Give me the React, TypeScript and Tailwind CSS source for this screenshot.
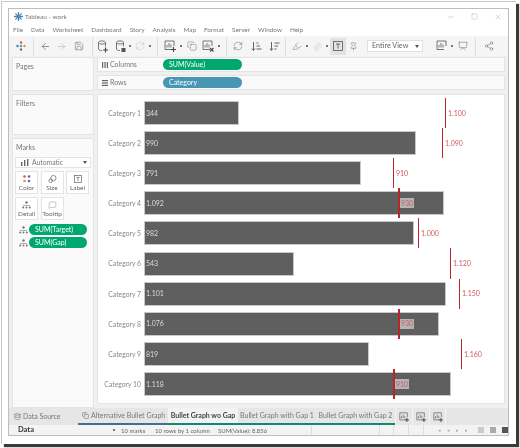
// Tableau workbook window with a bullet graph sheet
import type { ReactNode } from 'react';
import {
  ArrowLeft, ArrowRight, Save, RefreshCw, Pin, Presentation, Share2, Paperclip, Highlighter, Minus, Square, X,
  Database, Copy, MessageSquare,
} from 'lucide-react';

const FONT = { fontFamily: 'Lato, "Liberation Sans", sans-serif' };
const MENUS = ['File', 'Data', 'Worksheet', 'Dashboard', 'Story', 'Analysis', 'Map', 'Format', 'Server', 'Window', 'Help'];
const SCALE = 0.2735;

const ROWS = [
  { name: 'Category 1', value: 344, label: '344', target: 1100, tlabel: '1.100' },
  { name: 'Category 2', value: 990, label: '990', target: 1090, tlabel: '1.090' },
  { name: 'Category 3', value: 791, label: '791', target: 910, tlabel: '910' },
  { name: 'Category 4', value: 1092, label: '1.092', target: 930, tlabel: '930' },
  { name: 'Category 5', value: 982, label: '982', target: 1000, tlabel: '1.000' },
  { name: 'Category 6', value: 543, label: '543', target: 1120, tlabel: '1.120' },
  { name: 'Category 7', value: 1101, label: '1.101', target: 1150, tlabel: '1.150' },
  { name: 'Category 8', value: 1076, label: '1.076', target: 930, tlabel: '930' },
  { name: 'Category 9', value: 819, label: '819', target: 1160, tlabel: '1.160' },
  { name: 'Category 10', value: 1118, label: '1.118', target: 910, tlabel: '910' },
];

function Dot() {
  return <span className="mx-[2px] h-[2px] w-[2px] shrink-0 bg-[#777]" />;
}

function Sep() {
  return <span className="mx-[4px] h-[19px] w-px shrink-0 bg-[#dedede]" />;
}

function Btn({ children, w = 17, on, className = '' }: { children: ReactNode; w?: number; on?: boolean; className?: string }) {
  return (
    <span className={`flex h-[17px] shrink-0 items-center justify-center ${on ? 'bg-[#e2e2e2]' : ''} ${className}`} style={{ width: w }}>
      {children}
    </span>
  );
}

function Cylinder({ badge }: { badge: 'plus' | 'square' }) {
  return (
    <svg width="12" height="13" viewBox="0 0 12 13" fill="none" stroke="#666" strokeWidth="0.9">
      <ellipse cx="5" cy="2.5" rx="3.5" ry="1.6" />
      <path d="M1.5 2.5v6.5c0 .9 1.6 1.6 3.5 1.6M8.500 2.500v4" />
      {badge === 'plus' ? (
        <path d="M8.500 7.500v5M6 10h5" stroke="#444" strokeWidth="1.100" />
      ) : (
        <rect x="6.500" y="8" width="4" height="4" fill="#555" stroke="none" />
      )}
    </svg>
  );
}

function SheetIcon({ badge, size = 12 }: { badge: 'plus' | 'x' | 'none'; size?: number }) {
  return (
    <svg width={size} height={size} viewBox="0 0 12 12" fill="none" stroke="#666" strokeWidth="0.9">
      <path d="M8 9.500H1V1h9v5" />
      <path d="M3 7.500V5M5 7.500V3M7 7.500V4.500" />
      {badge === 'plus' && <path d="M9.500 7v5M7 9.500h5" stroke="#444" strokeWidth="1.100" />}
      {badge === 'x' && <path d="M8 8l3.500 3.500M11.500 8L8 11.500" stroke="#444" strokeWidth="1.100" />}
    </svg>
  );
}

function DetailIcon() {
  return (
    <svg width="9" height="8" viewBox="0 0 9 8" fill="#777">
      <circle cx="4.500" cy="1.500" r="1.200" />
      <circle cx="1.200" cy="6.500" r="1" />
      <circle cx="4.500" cy="6.500" r="1" />
      <circle cx="7.800" cy="6.500" r="1" />
      <rect x="1" y="4" width="7" height="0.600" />
    </svg>
  );
}

function SortIcon({ flip }: { flip?: boolean }) {
  return (
    <svg width="11" height="11" viewBox="0 0 11 11" fill="none" stroke="#666" strokeWidth="1">
      <path d="M2.500 1v8M1 7.500l1.500 2 1.500-2" />
      {flip ? <path d="M5.500 2h5M5.500 5h3.500M5.500 8h2" /> : <path d="M5.500 2h2M5.500 5h3.500M5.500 8h5" />}
    </svg>
  );
}

function TBox({ size = 10 }: { size?: number }) {
  return (
    <svg width={size} height={size} viewBox="0 0 10 10" fill="none" stroke="#555" strokeWidth="0.800">
      <rect x="0.500" y="0.500" width="9" height="9" />
      <path d="M3 3h4M5 3v4.500" />
    </svg>
  );
}

function Caret() {
  return <span className="ml-auto mr-[3px] h-0 w-0 border-x-2 border-t-[3px] border-x-transparent border-t-[#555]" />;
}

function MiniBars() {
  return (
    <svg width="8" height="7" viewBox="0 0 8 7" fill="#666" className="mr-[3px]">
      <rect x="0" y="3" width="1.400" height="4" />
      <rect x="3" y="1" width="1.400" height="6" />
      <rect x="6" y="0" width="1.400" height="7" />
    </svg>
  );
}

function Card({ title, className, children }: { title: string; className: string; children?: ReactNode }) {
  return (
    <div className={`border border-[#e4e4e4] bg-[#fafafa] px-[2px] pt-[2px] ${className}`}>
      <div className="pl-px text-[7px] leading-[12px] text-[#777]">{title}</div>
      {children}
    </div>
  );
}

function MarkBtn({ label, children }: { label: string; children: ReactNode }) {
  return (
    <div className="flex h-[23px] w-[23px] flex-col items-center justify-between border border-[#e4e4e4] bg-white pb-px pt-[3px] text-[6.500px] leading-[9px] text-[#666]">
      {children}
      <span>{label}</span>
    </div>
  );
}

function Shelf({ icon, label, pill, color }: { icon: ReactNode; label: string; pill: string; color: string }) {
  return (
    <div className="flex h-[15px] items-center border border-[#e4e4e4] bg-[#fafafa]">
      <span className="ml-[2px] flex w-[10px] justify-center">{icon}</span>
      <span className="w-[53px] text-[7px] text-[#777]">{label}</span>
      <span className={`flex h-[11px] w-[79px] items-center rounded-full pl-[6px] text-[7px] text-white ${color}`}>{pill}</span>
    </div>
  );
}

function Pill({ text }: { text: string }) {
  return (
    <div className="flex h-[11px] items-center gap-px pl-[4px]">
      <DetailIcon />
      <span className="flex h-[11px] w-[58px] items-center rounded-full bg-[#00a86f] pl-[6px] text-[7px] text-white">{text}</span>
    </div>
  );
}

function BarRow({ row }: { row: (typeof ROWS)[number] }) {
  const tickX = Math.round(row.target * SCALE);
  const over = row.target < row.value;
  return (
    <div className="flex h-[30.1px] items-center">
      <div className="w-[46px] shrink-0 pr-[3px] text-right text-[6.800px] text-[#888]">{row.name}</div>
      <div className="relative flex h-[30.1px] flex-1 items-center">
        <div
          className="flex h-[24px] items-center border border-[#c9c9c9] bg-[#5f5f5f] pl-[1px] text-[7px] text-[#dcdcdc]"
          style={{ width: row.value * SCALE + 1 }}
        >
          {row.label}
        </div>
        <div className={`absolute inset-y-0 bg-[#b5262d] ${over ? 'w-[1.750px]' : 'w-[1.250px]'}`} style={{ left: tickX }} />
        <div
          className={`absolute top-[10px] flex h-[10px] items-center px-px text-[7px] text-[#cf5a5f] ${over ? 'bg-[#b4b4b4]' : ''}`}
          style={{ left: tickX + 2 }}
        >
          {row.tlabel}
        </div>
      </div>
    </div>
  );
}

export default function App() {
  return (
    <div className="h-[448px] w-[520px] overflow-hidden whitespace-nowrap bg-white pl-px pt-px blur-[0.35px]" style={FONT}>
      <div className="h-[443px] w-[515px] border-l border-t border-[#c8c8c8] bg-white pl-[6px] pt-[6px] shadow-[3px_3px_1px_#3a3a3a]">
        <div className="flex h-[428px] w-[501px] flex-col border border-[#bdbdbd] bg-white">
          {/* Title bar */}
          <div className="flex h-[15px] shrink-0 items-center pl-[5px]">
            <svg width="9" height="9" viewBox="0 0 10 10" className="mr-[2px]">
              <path d="M5 0v10M0 5h10M1.500 1.500l7 7M8.500 1.500l-7 7" stroke="#4a86b5" strokeWidth="1.400" />
            </svg>
            <span className="text-[6.500px] text-[#777]">Tableau - work</span>
            <span className="ml-auto flex items-center gap-[16px] pr-[6px]">
              <Minus size={8} strokeWidth={1} color="#888" />
              <Square size={7} strokeWidth={1} color="#888" />
              <X size={8} strokeWidth={1} color="#888" />
            </span>
          </div>
          {/* Menu */}
          <div className="flex h-[12px] shrink-0 items-center gap-[8px] pl-[4px] text-[6.400px] text-[#777]">
            {MENUS.map((m) => (
              <span key={m}>{m}</span>
            ))}
          </div>
          {/* Toolbar */}
          <div className="flex h-[20px] shrink-0 items-center bg-[#f5f5f5] pl-[4px]">
            <Btn w={16}>
              <svg width="10" height="10" viewBox="0 0 10 10">
                <circle cx="5" cy="1.500" r="1.200" fill="#d9534f" />
                <circle cx="1.500" cy="5" r="1.200" fill="#4e79a7" />
                <circle cx="8.500" cy="5" r="1.200" fill="#e8913a" />
                <circle cx="5" cy="8.500" r="1.200" fill="#7a5aa6" />
                <circle cx="5" cy="5" r="1.200" fill="#3aa6a0" />
              </svg>
            </Btn>
            <Sep />
            <Btn w={15}><ArrowLeft size={11} strokeWidth={1.300} color="#555" /></Btn>
            <Btn w={17}><ArrowRight size={11} strokeWidth={1.100} color="#aaa" /></Btn>
            <Btn w={18}><Save size={10} strokeWidth={1.200} color="#666" /></Btn>
            <Sep />
            <Btn w={12}><Cylinder badge="plus" /></Btn>
            <Btn w={12} className="ml-[6px]"><Cylinder badge="square" /></Btn>
            <Dot />
            <Btn w={14}><RefreshCw size={10} strokeWidth={1} color="#bbb" /></Btn>
            <Dot />
            <Sep />
            <Btn w={16}><SheetIcon badge="plus" /></Btn>
            <Dot />
            <Btn w={16}><Copy size={10} strokeWidth={1.100} color="#666" /></Btn>
            <Btn w={16}><SheetIcon badge="x" /></Btn>
            <Dot />
            <Sep />
            <Btn w={14}><RefreshCw size={10} strokeWidth={1.200} color="#666" /></Btn>
            <Btn w={22}><SortIcon /></Btn>
            <Btn w={14}><SortIcon flip /></Btn>
            <Sep />
            <Btn w={14}><Highlighter size={10} strokeWidth={1.100} color="#666" /></Btn>
            <Dot />
            <Btn w={14}><Paperclip size={9} strokeWidth={1.100} color="#bbb" /></Btn>
            <Dot />
            <Btn w={16} on><TBox /></Btn>
            <Btn w={15}><Pin size={9} strokeWidth={1.200} color="#666" /></Btn>
            <span className="ml-[6px] flex h-[12px] w-[56px] shrink-0 items-center border border-[#e0e0e0] bg-white pl-[4px] text-[7.200px] text-[#666]">
              Entire View
              <Caret />
            </span>
            <span className="ml-[4px]"><Sep /></span>
            <Btn w={14}><SheetIcon badge="none" /></Btn>
            <Dot />
            <Btn w={16}><Presentation size={10} strokeWidth={1.200} color="#666" /></Btn>
            <Sep />
            <Btn w={17}><Share2 size={10} strokeWidth={1.200} color="#666" /></Btn>
          </div>
          {/* Workspace */}
          <div className="flex min-h-0 flex-1 gap-[3px] bg-[#f0f0f0] px-[3px] pt-px">
            <div className="flex w-[82px] shrink-0 flex-col gap-[3px]">
              <Card title="Pages" className="h-[34px]" />
              <Card title="Filters" className="h-[41px]" />
              <Card title="Marks" className="flex-1">
                <div className="mt-[4px] flex h-[11px] items-center border border-[#e4e4e4] bg-white pl-[5px] text-[6.800px] text-[#777]">
                  <MiniBars />
                  Automatic
                  <Caret />
                </div>
                <div className="mt-[3px] flex flex-wrap gap-x-[2.500px] gap-y-[3px]">
                  <MarkBtn label="Color">
                    <svg width="8" height="8" viewBox="0 0 8 8">
                      <circle cx="1.500" cy="1.500" r="1.300" fill="#d9534f" />
                      <circle cx="6" cy="1.500" r="1.300" fill="#7a5aa6" />
                      <circle cx="1.500" cy="6" r="1.300" fill="#e8913a" />
                      <circle cx="6" cy="6" r="1.300" fill="#4e79a7" />
                    </svg>
                  </MarkBtn>
                  <MarkBtn label="Size">
                    <svg width="9" height="9" viewBox="0 0 9 9" fill="none" stroke="#666" strokeWidth="0.800">
                      <circle cx="5.500" cy="3.500" r="3" />
                      <circle cx="2.500" cy="6.500" r="2" />
                    </svg>
                  </MarkBtn>
                  <MarkBtn label="Label"><TBox size={8} /></MarkBtn>
                  <MarkBtn label="Detail"><DetailIcon /></MarkBtn>
                  <MarkBtn label="Tooltip"><MessageSquare size={9} strokeWidth={1.100} color="#666" /></MarkBtn>
                </div>
                <div className="mt-[4px] flex flex-col gap-[2px]">
                  <Pill text="SUM(Target)" />
                  <Pill text="SUM(Gap)" />
                </div>
              </Card>
            </div>
            <div className="flex min-w-0 flex-1 flex-col">
              <div className="flex flex-col gap-[3px]">
                <Shelf
                  icon={
                    <svg width="6" height="6" viewBox="0 0 6 6" fill="#666">
                      <rect x="0" width="1.200" height="6" /><rect x="2.400" width="1.200" height="6" /><rect x="4.800" width="1.200" height="6" />
                    </svg>
                  }
                  label="Columns"
                  pill="SUM(Value)"
                  color="bg-[#00a86f]"
                />
                <Shelf
                  icon={
                    <svg width="6" height="6" viewBox="0 0 6 6" fill="#666">
                      <rect y="0" width="6" height="1.200" /><rect y="2.400" width="6" height="1.200" /><rect y="4.800" width="6" height="1.200" />
                    </svg>
                  }
                  label="Rows"
                  pill="Category"
                  color="bg-[#4696b4]"
                />
              </div>
              <div className="mt-[4px] h-[310px] border border-[#e4e4e4] bg-white pt-[3px]">
                {ROWS.map((r) => (
                  <BarRow key={r.name} row={r} />
                ))}
              </div>
            </div>
          </div>
          {/* Tabs */}
          <div className="flex h-[17px] shrink-0 items-stretch bg-[#e6e6e6] text-[7px] text-[#777]">
            <div className="flex w-[69px] items-center pl-[5px]">
              <Database size={7} color="#777" className="mr-[2px]" />Data Source
            </div>
            <div className="flex w-[90px] items-center border-b-2 border-[#3f6f94] pl-[4px]">
              <Copy size={7} color="#777" className="mr-[2px]" />Alternative Bullet Graph
            </div>
            <div className="flex w-[70px] items-center justify-center border-b-2 border-[#0f8a70] bg-[#f3f3f3] font-bold text-[#444]">
              Bullet Graph wo Gap
            </div>
            <div className="flex w-[78px] items-center justify-center border-b-2 border-[#0f8a70]">Bullet Graph with Gap 1</div>
            <div className="flex w-[79px] items-center justify-center border-b-2 border-[#0f8a70]">Bullet Graph with Gap 2</div>
            <div className="flex flex-1">
              {(['a', 'b', 'c'] as const).map((k) => (
                <span key={k} className="flex w-[17px] items-center justify-center border-l border-[#f5f5f5] last:border-r">
                  <SheetIcon badge="plus" size={10} />
                </span>
              ))}
            </div>
          </div>
          {/* Status bar */}
          <div className="flex h-[10px] shrink-0 items-center bg-[#f3f3f3] text-[6px] text-[#666]">
            <span className="w-[104px] pl-[9px] text-[7.500px] font-bold text-[#333]">Data</span>
            <span className="mr-[6px] h-[2px] w-[2px] bg-[#777]" />
            <span className="w-[34px]">10 marks</span>
            <span className="w-[63px]">10 rows by 1 column</span>
            <span className="w-[94px] border-r border-[#ddd]">SUM(Value): 8.856</span>
            <span className="h-[10px] w-[68px] border-r border-[#ddd]" />
            <span className="h-[10px] w-[14px] border-r border-[#ddd]" />
            <span className="h-[10px] w-[15px] border-r border-[#ddd]" />
            <span className="h-[10px] w-[15px] border-r border-[#ddd]" />
            <span className="ml-[14px] flex w-[30px] items-center justify-between text-[5px] leading-none text-[#aaa]">
              <span>◂</span><span>◂</span><span>▸</span><span>▸</span>
            </span>
            <span className="ml-[10px] flex items-center gap-[6px]">
              <span className="h-[6px] w-[6px] bg-[#ccc]" />
              <span className="h-[6px] w-[6px] bg-[#aaa]" />
              <span className="h-[6px] w-[6px] bg-[#555]" />
            </span>
          </div>
        </div>
      </div>
    </div>
  );
}
